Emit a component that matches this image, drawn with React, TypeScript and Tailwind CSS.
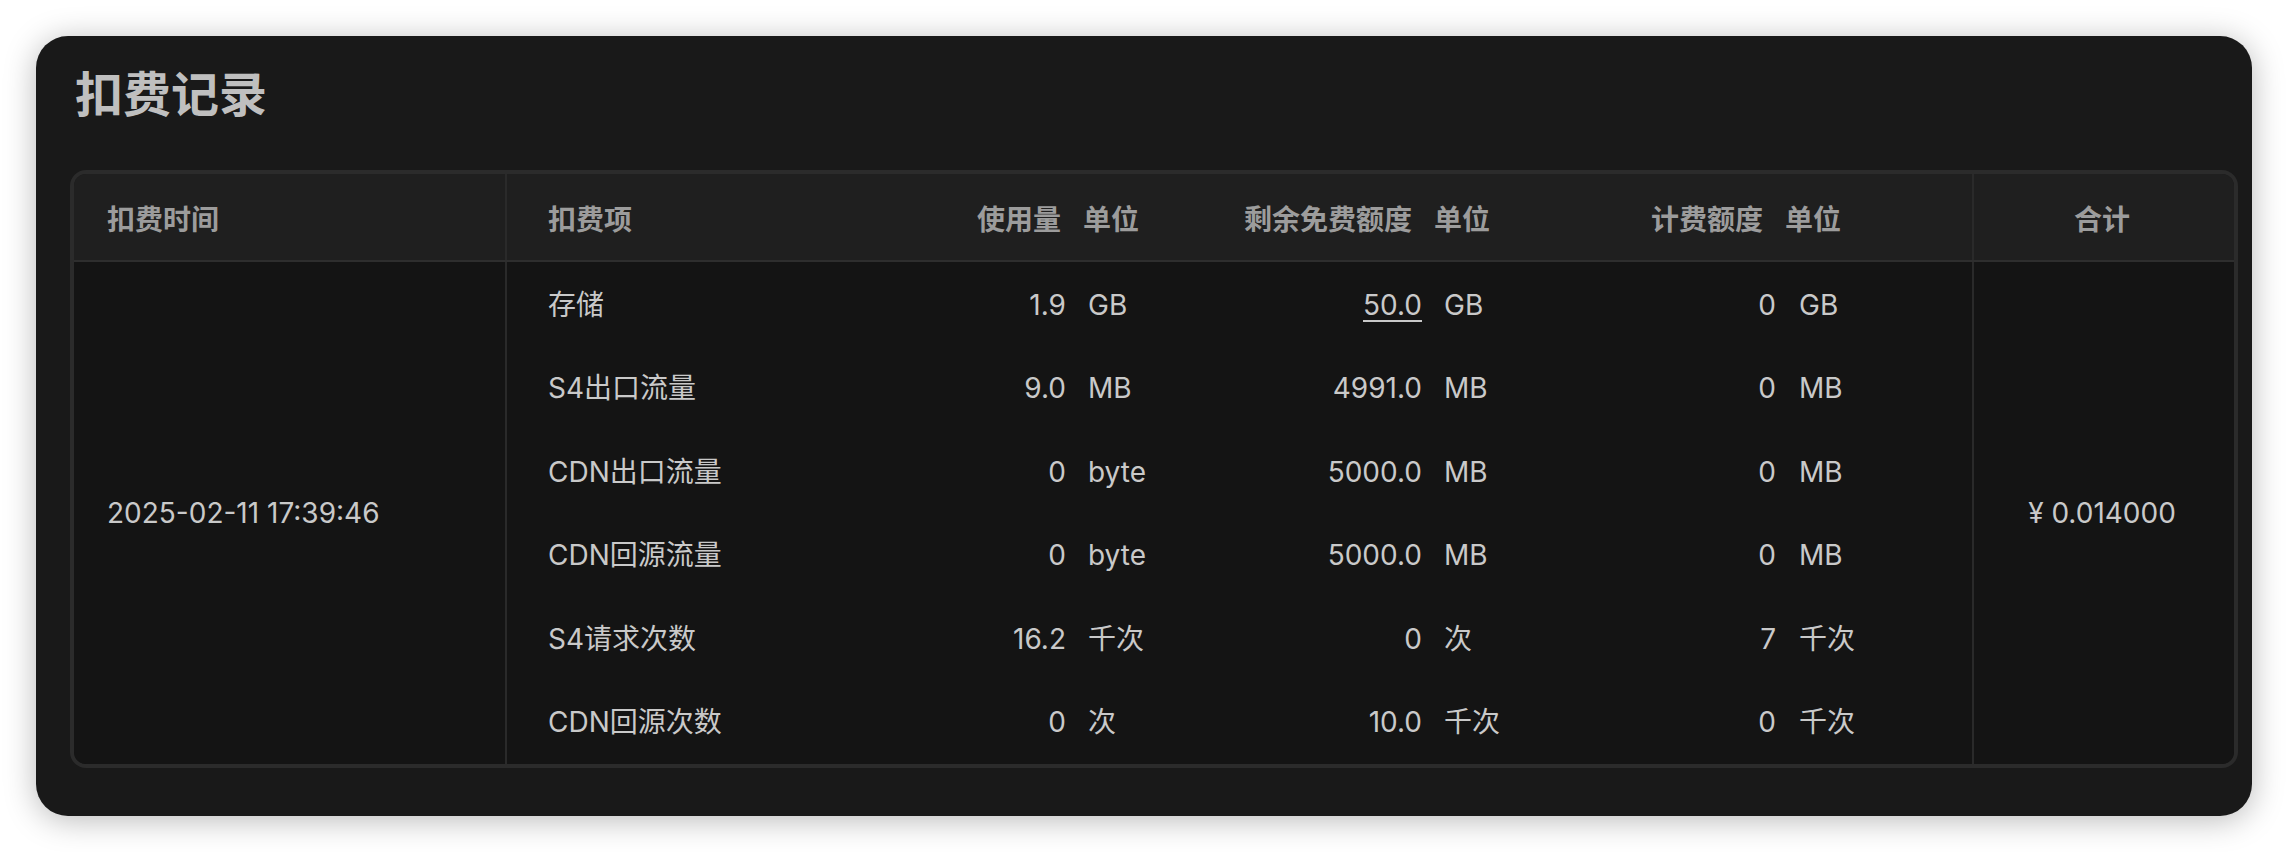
import React from "react";

type Row = {
  name: string;
  used: string;
  usedUnit: string;
  free: string;
  freeUnit: string;
  freeLink?: boolean;
  billed: string;
  billedUnit: string;
};

const rows: Row[] = [
  { name: "存储", used: "1.9", usedUnit: "GB", free: "50.0", freeUnit: "GB", freeLink: true, billed: "0", billedUnit: "GB" },
  { name: "S4出口流量", used: "9.0", usedUnit: "MB", free: "4991.0", freeUnit: "MB", billed: "0", billedUnit: "MB" },
  { name: "CDN出口流量", used: "0", usedUnit: "byte", free: "5000.0", freeUnit: "MB", billed: "0", billedUnit: "MB" },
  { name: "CDN回源流量", used: "0", usedUnit: "byte", free: "5000.0", freeUnit: "MB", billed: "0", billedUnit: "MB" },
  { name: "S4请求次数", used: "16.2", usedUnit: "千次", free: "0", freeUnit: "次", billed: "7", billedUnit: "千次" },
  { name: "CDN回源次数", used: "0", usedUnit: "次", free: "10.0", freeUnit: "千次", billed: "0", billedUnit: "千次" },
];

export default function App() {
  return (
    <div className="min-h-[852px] w-full bg-white p-[36px] font-['Inter','Noto_Sans_CJK_SC',sans-serif]">
      <div className="w-[2216px] h-[780px] rounded-[32px] bg-[#191919] pl-[34px] shadow-[0_4px_32px_rgba(0,0,0,0.28)]">
        <h1 className="pt-[35px] pl-[5px] text-[48px] leading-[48px] font-bold text-[#bfbfbf]">扣费记录</h1>
        <div className="mt-[51px] w-[2168px] rounded-[16px] border-[4px] border-[#2b2b2b] overflow-hidden text-[28px]">
          {/* header */}
          <div className="flex h-[88px] bg-[#1f1f1f] border-b-[2px] border-[#2e2e2e] font-semibold text-[#9c9c9c]">
            <div className="w-[433px] flex items-center pt-[5px] pl-[33px] border-r-[2px] border-[#2a2a2a]">扣费时间</div>
            <div className="w-[1465px] pt-[5px] grid grid-cols-[393px_161px_179px_172px_188px_163px_209px] items-center">
              <div className="pl-[41px]">扣费项</div>
              <div className="text-right">使用量</div>
              <div className="pl-[22px]">单位</div>
              <div className="text-right">剩余免费额度</div>
              <div className="pl-[22px]">单位</div>
              <div className="text-right">计费额度</div>
              <div className="pl-[22px]">单位</div>
            </div>
            <div className="w-[258px] flex items-center justify-center pt-[5px] border-l-[2px] border-[#2a2a2a]">合计</div>
          </div>
          {/* body */}
          <div className="flex bg-[#141414] text-[#c9c9c9]">
            <div className="w-[433px] flex items-center pl-[33px] border-r-[2px] border-[#2a2a2a]">2025-02-11 17:39:46</div>
            <div className="w-[1465px] flex flex-col pt-[1px]">
              {rows.map((r) => (
                <div
                  key={r.name}
                  className="h-[83.5px] grid grid-cols-[473px_86px_134px_222px_138px_216px_196px] items-center"
                >
                  <div className="pl-[41px]">{r.name}</div>
                  <div className="text-right">{r.used}</div>
                  <div className="pl-[22px]">{r.usedUnit}</div>
                  <div className="text-right">
                    {r.freeLink ? (
                      <span className="underline decoration-[2px] underline-offset-[5px]">{r.free}</span>
                    ) : (
                      r.free
                    )}
                  </div>
                  <div className="pl-[22px]">{r.freeUnit}</div>
                  <div className="text-right">{r.billed}</div>
                  <div className="pl-[23px]">{r.billedUnit}</div>
                </div>
              ))}
            </div>
            <div className="w-[258px] flex items-center justify-center border-l-[2px] border-[#2a2a2a]">¥ 0.014000</div>
          </div>
        </div>
      </div>
    </div>
  );
}
